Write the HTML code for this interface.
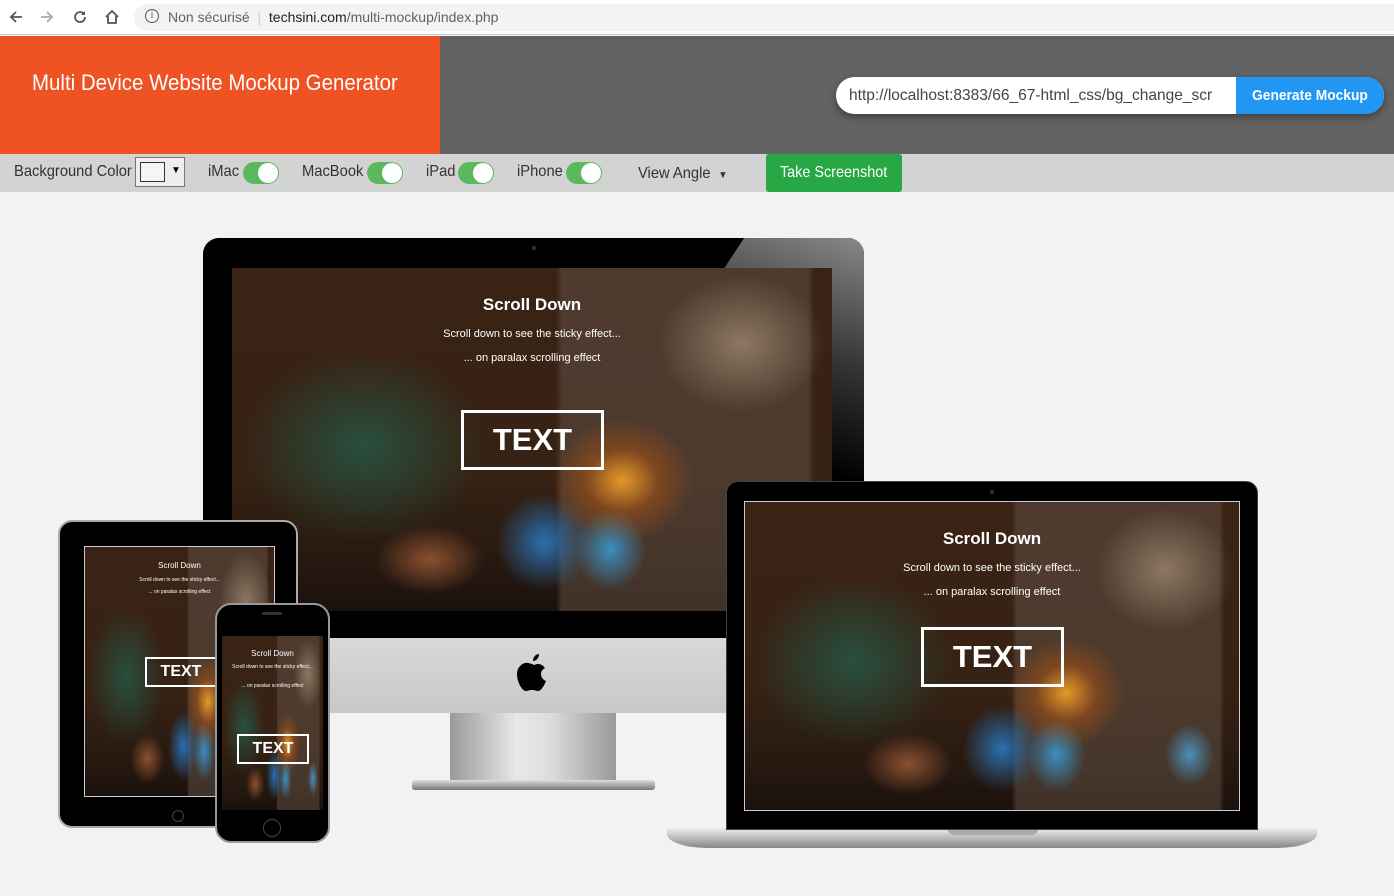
<!DOCTYPE html>
<html><head><meta charset="utf-8"><style>
*{margin:0;padding:0;box-sizing:border-box}
body{width:1394px;height:896px;overflow:hidden;background:#f2f2f2;font-family:"Liberation Sans",sans-serif;position:relative}
.abs{position:absolute}
.chrome{left:0;top:0;width:1394px;height:35px;background:#fff;border-bottom:1px solid #ccc}
.omni{left:134px;top:4px;width:1260px;height:27px;background:#f1f3f4;border-radius:14px 0 0 14px}
.hdr1{left:0;top:36px;width:440px;height:118px;background:#ef5223}
.hdr2{left:440px;top:36px;width:954px;height:118px;background:#636363}
.bar{left:0;top:154px;width:1394px;height:38px;background:#d3d3d3}
.nar{transform:scaleX(.92);transform-origin:left center;white-space:nowrap}
.lbl{font-size:16px;color:#333;top:163px}
.tog{width:36px;height:22px;border-radius:11px;background:#5cb85c;top:162px}
.tog::after{content:"";position:absolute;right:1px;top:1px;width:20px;height:20px;border-radius:50%;background:#fff}
.scene{overflow:hidden;background:
radial-gradient(ellipse 12% 18% at 65% 62%,rgba(255,170,40,.85),rgba(200,90,10,.4) 50%,transparent 100%),
radial-gradient(ellipse 8% 14% at 52% 80%,#2a6fb0,transparent 100%),
radial-gradient(ellipse 6% 12% at 63% 82%,#3a8fc0,transparent 100%),
radial-gradient(ellipse 5% 10% at 90% 82%,#4a8fb8,transparent 100%),
radial-gradient(ellipse 9% 10% at 33% 85%,#8a5030,transparent 100%),
radial-gradient(ellipse 20% 28% at 22% 52%,rgba(30,110,90,.6),transparent 100%),
radial-gradient(ellipse 14% 20% at 85% 22%,rgba(200,180,150,.5),transparent 100%),
linear-gradient(90deg,transparent 54%,rgba(100,82,70,.5) 55%,rgba(100,82,70,.5) 96%,transparent 97%),
linear-gradient(180deg,#3a2315 0%,#362214 60%,#261810 88%,#1a110c 100%)}
.scene .t{position:absolute;left:0;width:100%;text-align:center;color:#fff}
.scene .box{position:absolute;border:3px solid #fff;color:#fff;font-weight:bold;text-align:center}
</style></head><body>
<div class="abs chrome"></div>
<svg class="abs" style="left:8px;top:9px" width="16" height="16" viewBox="0 0 16 16"><path d="M14 8H3M8 3L3 8l5 5" stroke="#555" stroke-width="1.8" fill="none"/></svg>
<svg class="abs" style="left:39px;top:9px" width="16" height="16" viewBox="0 0 16 16"><path d="M2 8h11M8 3l5 5-5 5" stroke="#aaa" stroke-width="1.8" fill="none"/></svg>
<svg class="abs" style="left:72px;top:9px" width="16" height="16" viewBox="0 0 16 16"><path d="M13 8a5 5 0 1 1-1.5-3.5" stroke="#555" stroke-width="1.8" fill="none"/><path d="M13 2v4H9z" fill="#555"/></svg>
<svg class="abs" style="left:103px;top:8px" width="18" height="18" viewBox="0 0 18 18"><path d="M3 9L9 3l6 6M5 8v7h8V8" stroke="#555" stroke-width="1.8" fill="none"/></svg>
<div class="abs omni"></div>
<div class="abs" style="left:145px;top:9px;width:14px;height:14px;border:1.5px solid #555;border-radius:50%;font-size:10px;text-align:center;line-height:11px;color:#555">i</div>
<div class="abs" style="left:168px;top:9px;font-size:14px;color:#5f6368">Non sécurisé &nbsp;<span style="color:#ccc">|</span>&nbsp; <span style="color:#202124">techsini.com</span>/multi-mockup/index.php</div>
<div class="abs hdr1"></div><div class="abs hdr2"></div>
<div class="abs nar" style="left:32px;top:70px;font-size:22px;color:#fff;transform:scaleX(.93)">Multi Device Website Mockup Generator</div>
<div class="abs" style="left:836px;top:77px;width:548px;height:37px;border-radius:19px;background:#fff;box-shadow:0 3px 8px rgba(0,0,0,.4);overflow:hidden">
<div class="abs nar" style="left:13px;top:10px;font-size:16px;color:#444;transform:scaleX(.97)">http://localhost:8383/66_67-html_css/bg_change_scr</div>
<div class="abs" style="left:400px;top:0;width:148px;height:37px;background:#2196f3;color:#fff;font-weight:bold;font-size:15px;text-align:center;line-height:37px"><span style="display:inline-block;transform:scaleX(.92)">Generate Mockup</span></div></div>
<div class="abs bar"></div>
<div class="abs lbl nar" style="left:14px">Background Color</div>
<div class="abs" style="left:135px;top:157px;width:50px;height:30px;border:1px solid #8a7060;background:#eee"></div>
<div class="abs" style="left:140px;top:162px;width:25px;height:20px;border:1px solid #333;background:#f5f5f5"></div>
<div class="abs" style="left:171px;top:165px;font-size:10px">&#9660;</div>
<div class="abs lbl nar" style="left:208px">iMac</div><div class="abs tog" style="left:243px"></div>
<div class="abs lbl nar" style="left:302px">MacBook</div><div class="abs tog" style="left:367px"></div>
<div class="abs lbl nar" style="left:426px">iPad</div><div class="abs tog" style="left:458px"></div>
<div class="abs lbl nar" style="left:517px">iPhone</div><div class="abs tog" style="left:566px"></div>
<div class="abs lbl nar" style="left:638px;top:165px">View Angle <span style="font-size:10px;margin-left:4px">&#9660;</span></div>
<div class="abs" style="left:766px;top:154px;width:136px;height:38px;background:#28a745;border-radius:3px;color:#fff;font-size:16px;text-align:center;line-height:38px"><span style="display:inline-block;transform:scaleX(.9)">Take Screenshot</span></div>

<!-- iMac -->
<div class="abs" style="left:450px;top:712px;width:166px;height:72px;background:linear-gradient(90deg,#999,#e8e8e8 40%,#ddd 60%,#999)"></div>
<div class="abs" style="left:412px;top:780px;width:243px;height:10px;border-radius:3px;background:linear-gradient(#ddd,#777)"></div>
<div class="abs" style="left:203px;top:238px;width:661px;height:475px;border-radius:16px;background:#000;overflow:hidden">
<div class="abs" style="left:0;top:400px;width:661px;height:75px;background:linear-gradient(#d8d8d8,#c8c8c8)"></div>
<div class="abs" style="left:520px;top:0;width:141px;height:400px;background:linear-gradient(200deg,#888 0%,#333 30%,#000 55%);clip-path:polygon(15% 0,100% 0,100% 100%,0 100%,0 8%)"></div>
<div class="abs" style="left:329px;top:8px;width:4px;height:4px;border-radius:50%;background:#333"></div>
</div>
<svg class="abs" style="left:517px;top:654px" width="33" height="38" viewBox="0 0 33 38"><path d="M22 0c0 4-3 7-6 7 0-4 3-7 6-7z" fill="#000"/><path d="M16 10c-3 0-5-2-8-1-4 1-8 5-8 11 0 8 5 17 9 17 2 0 3-1 6-1s4 1 6 1c3 0 6-5 8-10-3-1-5-4-5-7 0-3 2-5 4-6-2-3-5-4-7-4-2 0-3 1-5 1z" fill="#000"/></svg>
<div class="abs scene" style="left:232px;top:268px;width:600px;height:343px">
<div class="t" style="top:27px;font-size:17px;font-weight:bold">Scroll Down</div>
<div class="t" style="top:60px;font-size:11px">Scroll down to see the sticky effect...</div>
<div class="t" style="top:84px;font-size:11px">... on paralax scrolling effect</div>
<div class="box" style="left:229px;top:142px;width:143px;height:60px;font-size:31px;line-height:54px">TEXT</div>
</div>

<!-- MacBook -->
<div class="abs" style="left:667px;top:828px;width:650px;height:20px;border-radius:0 0 40px 40px/0 0 14px 14px;background:linear-gradient(#eee,#bbb 50%,#888)"></div>
<div class="abs" style="left:948px;top:828px;width:90px;height:7px;border-radius:0 0 6px 6px;background:#aaa"></div>
<div class="abs" style="left:726px;top:481px;width:532px;height:349px;border-radius:12px 12px 0 0;background:#000;border:1px solid #444"></div>
<div class="abs" style="left:990px;top:490px;width:4px;height:4px;border-radius:50%;background:#333"></div>
<div class="abs scene" style="left:744px;top:501px;width:496px;height:310px;border:1px solid #ccc">
<div class="t" style="top:27px;font-size:17px;font-weight:bold">Scroll Down</div>
<div class="t" style="top:60px;font-size:11px">Scroll down to see the sticky effect...</div>
<div class="t" style="top:84px;font-size:11px">... on paralax scrolling effect</div>
<div class="box" style="left:176px;top:125px;width:143px;height:60px;font-size:31px;line-height:54px">TEXT</div>
</div>

<!-- iPad -->
<div class="abs" style="left:58px;top:520px;width:240px;height:308px;border-radius:14px;background:#000;border:2px solid #aaa"></div>
<div class="abs" style="left:172px;top:810px;width:12px;height:12px;border-radius:50%;border:1px solid #444"></div>
<div class="abs scene" style="left:84px;top:546px;width:191px;height:251px;border:1px solid #ccc">
<div class="t" style="top:14px;font-size:8px">Scroll Down</div>
<div class="t" style="top:30px;font-size:5px">Scroll down to see the sticky effect...</div>
<div class="t" style="top:42px;font-size:5px">... on paralax scrolling effect</div>
<div class="box" style="left:60px;top:110px;width:72px;height:30px;font-size:16px;line-height:25px;border-width:2px">TEXT</div>
</div>

<!-- iPhone -->
<div class="abs" style="left:215px;top:603px;width:115px;height:240px;border-radius:16px;background:#000;border:2px solid #999"></div>
<div class="abs" style="left:262px;top:612px;width:20px;height:3px;border-radius:2px;background:#333"></div>
<div class="abs" style="left:263px;top:819px;width:18px;height:18px;border-radius:50%;border:1px solid #444"></div>
<div class="abs scene" style="left:222px;top:636px;width:101px;height:174px">
<div class="t" style="top:13px;font-size:8px">Scroll Down</div>
<div class="t" style="top:28px;font-size:5px">Scroll down to see the sticky effect...</div>
<div class="t" style="top:47px;font-size:5px">... on paralax scrolling effect</div>
<div class="box" style="left:15px;top:98px;width:72px;height:30px;font-size:16px;line-height:25px;border-width:2px">TEXT</div>
</div>
</body></html>
